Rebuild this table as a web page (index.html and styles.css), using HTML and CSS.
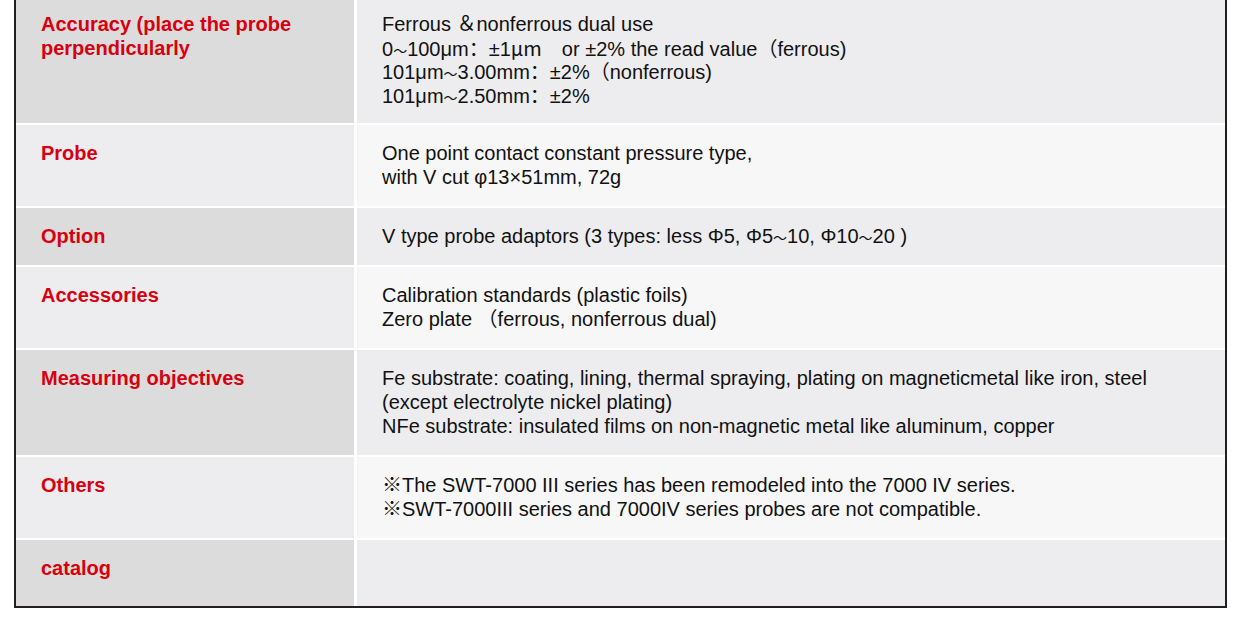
FILE: index.html
```html
<!DOCTYPE html>
<html lang="en">
<head>
<meta charset="utf-8">
<title>Specifications</title>
<link rel="stylesheet" href="styles.css">
</head>
<body>
<div class="spec">
  <div class="row odd first">
    <div class="label">Accuracy (place the probe perpendicularly</div>
    <div class="value">
      <div class="line">Ferrous ＆nonferrous dual use</div>
      <div class="line">0<span class="tilde">～</span>100μm：±1<span class="cjk">μm</span>　or ±2% the read value（ferrous)</div>
      <div class="line">101μm<span class="tilde">～</span>3.00mm：±2%（nonferrous)</div>
      <div class="line">101μm<span class="tilde">～</span>2.50mm：±2%</div>
    </div>
  </div>
  <div class="row even">
    <div class="label">Probe</div>
    <div class="value">
      <div class="line">One point contact constant pressure type,</div>
      <div class="line">with V cut φ13×51mm, 72g</div>
    </div>
  </div>
  <div class="row odd">
    <div class="label">Option</div>
    <div class="value">
      <div class="line">V type probe adaptors (3 types: less Φ5, Φ5<span class="tilde">～</span>10, Φ10<span class="tilde">～</span>20 )</div>
    </div>
  </div>
  <div class="row even">
    <div class="label">Accessories</div>
    <div class="value">
      <div class="line">Calibration standards (plastic foils)</div>
      <div class="line">Zero plate （ferrous, nonferrous dual)</div>
    </div>
  </div>
  <div class="row odd">
    <div class="label">Measuring objectives</div>
    <div class="value">
      <div class="line">Fe substrate: coating, lining, thermal spraying, plating on magneticmetal like iron, steel</div>
      <div class="line">(except electrolyte nickel plating)</div>
      <div class="line">NFe substrate: insulated films on non-magnetic metal like aluminum, copper</div>
    </div>
  </div>
  <div class="row even">
    <div class="label">Others</div>
    <div class="value">
      <div class="line">※The SWT-7000 III series has been remodeled into the 7000 IV series.</div>
      <div class="line">※SWT-7000III series and 7000IV series probes are not compatible.</div>
    </div>
  </div>
  <div class="row odd last">
    <div class="label">catalog</div>
    <div class="value"></div>
  </div>
</div>
</body>
</html>
```

FILE: styles.css
```css
html, body {
  margin: 0;
  padding: 0;
  background: #ffffff;
}

body {
  font-family: "Liberation Sans", Arial, "Noto Sans CJK SC", sans-serif;
}

.spec {
  width: 1213px;
  box-sizing: border-box;
  margin: -4px 0 0 14px;
  border: 2px solid #231f20;
  border-top: none;
  display: flex;
  flex-direction: column;
  gap: 2px;
  background: #ffffff;
}

.row {
  display: grid;
  grid-template-columns: 338px 1fr;
  column-gap: 3px;
}

.label,
.value {
  padding: 16px 25px 17px 25px;
  font-size: 20px;
  line-height: 24px;
}

.label {
  color: #d7000f;
  font-weight: bold;
}

.value {
  color: #111111;
}

.line {
  height: 24px;
  white-space: nowrap;
}

.odd .label { background: #dcdcdc; }
.odd .value { background: #ededef; }
.even .label { background: #ededef; }
.even .value { background: #f7f7f7; }

.first .label,
.first .value {
  padding-bottom: 15px;
}

.first .label {
  padding-right: 40px;
}

.last {
  min-height: 66px;
}

.cjk {
  font-family: "Noto Sans CJK SC", sans-serif;
}

.tilde {
  font-family: "Noto Sans CJK SC", sans-serif;
  font-size: 14px;
}
```
